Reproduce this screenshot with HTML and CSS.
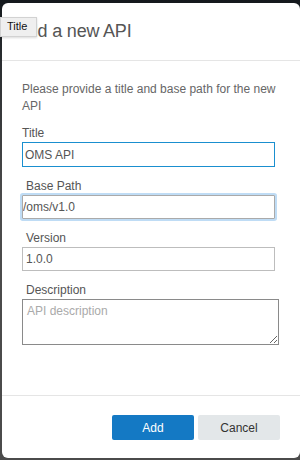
FILE: index.html
```html
<!DOCTYPE html>
<html>
<head>
<meta charset="utf-8">
<link rel="stylesheet" href="styles.css">
</head>
<body>
<div class="modal">
  <div class="tooltip">Title</div>
  <div class="modal-header">
    <h1 class="modal-title">Add a new API</h1>
  </div>
  <div class="modal-body">
    <p class="intro">Please provide a title and base path for the new API</p>
    <div class="field">
      <label class="label">Title</label>
      <input class="input input-active" type="text" value="OMS API">
    </div>
    <div class="field">
      <label class="label label-indent">Base Path</label>
      <input class="input input-focus" type="text" value="/oms/v1.0">
    </div>
    <div class="field">
      <label class="label label-indent">Version</label>
      <input class="input" type="text" value="1.0.0">
    </div>
    <div class="field">
      <label class="label label-indent">Description</label>
      <textarea class="textarea" placeholder="API description"></textarea>
    </div>
  </div>
  <div class="modal-footer">
    <button class="btn btn-primary">Add</button>
    <button class="btn btn-secondary">Cancel</button>
  </div>
</div>
</body>
</html>
```

FILE: styles.css
```css
html, body {
  margin: 0;
  padding: 0;
  width: 300px;
  height: 460px;
  overflow: hidden;
}
body {
  background: linear-gradient(to bottom, #14191d 0, #2a2d30 60px, #4b4b4b 200px, #4b4b4b 100%);
  font-family: "Liberation Sans", Arial, sans-serif;
}
.modal {
  position: relative;
  margin: 3px 0 0 2px;
  width: 298px;
  height: 455px;
  background: #fff;
  border-radius: 6px;
  display: flex;
  flex-direction: column;
  box-sizing: border-box;
}
.tooltip {
  position: absolute;
  left: -2px;
  top: 14px;
  width: 37px;
  height: 20px;
  box-sizing: border-box;
  background: #efefef;
  border: 1px solid #d2d2d2;
  box-shadow: 0 1px 2px rgba(0,0,0,0.15);
  font-size: 11px;
  line-height: 17px;
  color: #111;
  padding-left: 6px;
  z-index: 2;
}
.modal-header {
  height: 57px;
  border-bottom: 1px solid #e5e5e5;
  display: flex;
  align-items: center;
  padding-left: 14px;
}
.modal-title {
  margin: 0;
  font-size: 18px;
  font-weight: normal;
  color: #555;
  letter-spacing: -0.2px;
}
.modal-body {
  flex: 1;
  padding: 20px 0 0 20px;
}
.intro {
  margin: 0;
  font-size: 12px;
  line-height: 17px;
  color: #666;
  width: 256px;
}
.field {
  margin-top: 11px;
}
.field + .field {
  margin-top: 12px;
}
.label {
  display: block;
  font-size: 12px;
  line-height: 15px;
  color: #555;
  margin-bottom: 1px;
}
.label-indent {
  padding-left: 4px;
}
.input {
  display: block;
  box-sizing: border-box;
  width: 253px;
  height: 24px;
  margin: 0;
  padding: 0 3px;
  border: 1px solid #bdbdbd;
  border-radius: 0;
  font-family: inherit;
  font-size: 12px;
  color: #555;
  background: #fff;
  outline: none;
}
.input-active {
  height: 25px;
  border-color: #1a8fcf;
  padding-left: 2px;
}
.input-focus {
  border-color: #aaaaaa;
  box-shadow: 0 0 0 2px #bfdcf5;
  border-radius: 1px;
  padding-left: 0;
}
.textarea {
  display: block;
  box-sizing: border-box;
  width: 257px;
  height: 46px;
  margin: 0;
  padding: 4px 4px;
  border: 1px solid #8a8a8a;
  border-radius: 0;
  font-family: inherit;
  font-size: 12px;
  color: #555;
  resize: both;
  outline: none;
}
.textarea::placeholder {
  color: #aaa;
}
.modal-footer {
  border-top: 1px solid #e5e5e5;
  height: 63px;
  box-sizing: border-box;
  padding: 19px 20px 0 0;
  display: flex;
  justify-content: flex-end;
  align-items: flex-start;
  gap: 4px;
}
.btn {
  width: 82px;
  height: 25px;
  border: none;
  border-radius: 2px;
  font-family: inherit;
  font-size: 12px;
  padding: 0;
}
.btn-primary {
  background: #1479c4;
  color: #fff;
}
.btn-secondary {
  background: #e3e7e9;
  color: #333;
}
```
